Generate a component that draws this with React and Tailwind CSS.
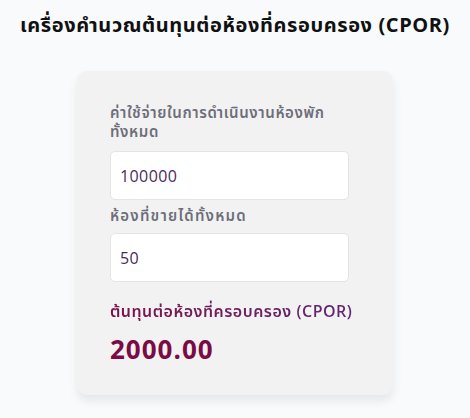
import { useState } from "react";

const font = {
  fontFamily: '"Open Sans", "Noto Sans", "Noto Sans Thai", sans-serif',
};

export default function App() {
  const [cost, setCost] = useState("100000");
  const [rooms, setRooms] = useState("50");
  const cpor = Number(rooms) > 0 ? (Number(cost) / Number(rooms)).toFixed(2) : "0.00";

  return (
    <div className="min-h-[418px] w-[470px] bg-[#f8fafc] pt-[12px]" style={font}>
      {/* Title */}
      <h1 className="text-center text-[20px] font-bold leading-[26px] tracking-[0.6px] text-[#111]">
        เครื่องคำนวณต้นทุนต่อห้องที่ครอบครอง (CPOR)
      </h1>

      {/* Card */}
      <div className="mx-auto mt-[33px] w-[316px] rounded-[10px] bg-[#f2f2f2] pt-[32px] pb-[30px] pl-[33px] pr-[30px] shadow-[0_6px_10px_rgba(0,0,0,0.08)]">
        <label className="block text-[15px] font-semibold leading-[19px] tracking-[0.6px] text-[#6e6e7a]">
          ค่าใช้จ่ายในการดำเนินงานห้องพัก
          <br />
          ทั้งหมด
        </label>
        <input
          value={cost}
          onChange={(e) => setCost(e.target.value)}
          className="mt-[10px] block h-[49px] w-[239px] rounded-[5px] border border-[#e4e4e4] bg-white px-[9px] text-[16px] tracking-[0.4px] text-[#4b2a5c] outline-none"
        />

        <label className="mt-[6px] block text-[15px] font-semibold leading-[19px] tracking-[1.2px] text-[#6e6e7a]">
          ห้องที่ขายได้ทั้งหมด
        </label>
        <input
          value={rooms}
          onChange={(e) => setRooms(e.target.value)}
          className="mt-[8px] block h-[49px] w-[239px] rounded-[5px] border border-[#e4e4e4] bg-white px-[9px] text-[16px] tracking-[0.4px] text-[#4b2a5c] outline-none"
        />

        <p className="mt-[18px] whitespace-nowrap bg-gradient-to-r from-[#7b1048] to-[#5f2676] bg-clip-text text-[16px] font-semibold leading-[22px] tracking-[0.5px] text-transparent">
          ต้นทุนต่อห้องที่ครอบครอง (CPOR)
        </p>
        <p className="mt-[11px] text-[26px] font-bold leading-[32px] tracking-[1px] text-[#7b0a45]">
          {cpor}
        </p>
      </div>
    </div>
  );
}
